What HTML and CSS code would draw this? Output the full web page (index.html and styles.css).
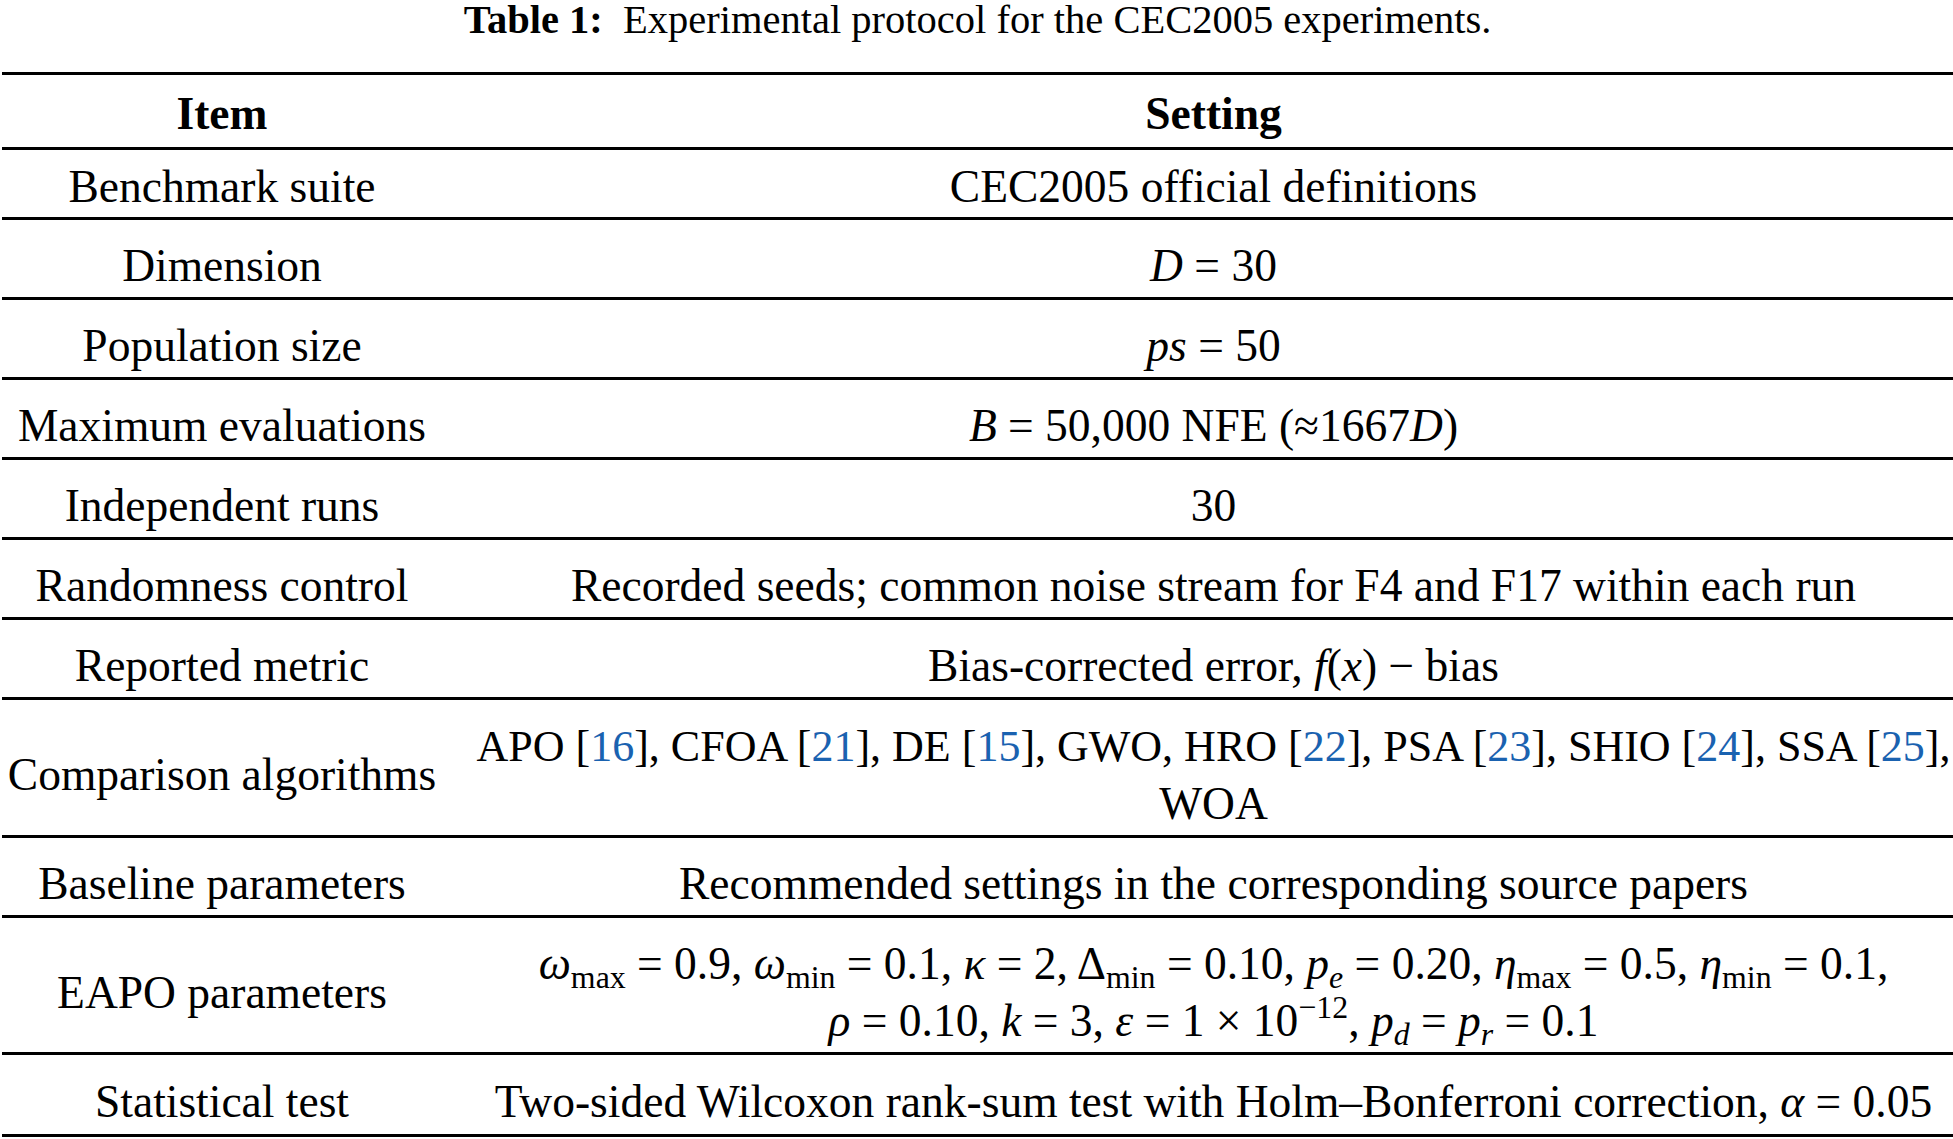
FILE: index.html
```html
<!DOCTYPE html>
<html>
<head>
<meta charset="utf-8">
<link rel="stylesheet" href="styles.css">
</head>
<body>
<div class="page">
  <div class="caption"><span class="cap-label">Table 1:</span>&nbsp; Experimental protocol for the CEC2005 experiments.</div>
  <table class="proto">
    <colgroup><col class="c1"><col class="c2"></colgroup>
    <thead>
      <tr class="head"><th>Item</th><th>Setting</th></tr>
    </thead>
    <tbody>
      <tr class="first"><td>Benchmark suite</td><td>CEC2005 official definitions</td></tr>
      <tr><td>Dimension</td><td><i>D</i> = 30</td></tr>
      <tr><td>Population size</td><td><i>ps</i> = 50</td></tr>
      <tr><td>Maximum evaluations</td><td><i>B</i> = 50,000 NFE (≈1667<i>D</i>)</td></tr>
      <tr><td>Independent runs</td><td>30</td></tr>
      <tr><td>Randomness control</td><td>Recorded seeds; common noise stream for F4 and F17 within each run</td></tr>
      <tr><td>Reported metric</td><td>Bias-corrected error, <i>f</i>(<i>x</i>) − bias</td></tr>
      <tr class="two"><td>Comparison algorithms</td><td><span class="tight">APO [<span class="ref">16</span>], CFOA [<span class="ref">21</span>], DE [<span class="ref">15</span>], GWO, HRO [<span class="ref">22</span>], PSA [<span class="ref">23</span>], SHIO [<span class="ref">24</span>], SSA [<span class="ref">25</span>],</span><br>WOA</td></tr>
      <tr><td>Baseline parameters</td><td>Recommended settings in the corresponding source papers</td></tr>
      <tr class="two"><td>EAPO parameters</td><td><i>ω</i><sub>max</sub> = 0.9, <i>ω</i><sub>min</sub> = 0.1, <i>κ</i> = 2, Δ<sub>min</sub> = 0.10, <i>p<sub>e</sub></i> = 0.20, <i>η</i><sub>max</sub> = 0.5, <i>η</i><sub>min</sub> = 0.1,<br><i>ρ</i> = 0.10, <i>k</i> = 3, <i>ε</i> = 1 × 10<sup>−12</sup>, <i>p<sub>d</sub></i> = <i>p<sub>r</sub></i> = 0.1</td></tr>
      <tr class="last"><td>Statistical test</td><td>Two-sided Wilcoxon rank-sum test with Holm–Bonferroni correction, <i>α</i> = 0.05</td></tr>
    </tbody>
  </table>
</div>
</body>
</html>
```

FILE: styles.css
```css
html, body {
  margin: 0;
  padding: 0;
  background: #fff;
}
body {
  font-family: "Liberation Serif", "DejaVu Serif", serif;
  color: #000;
}
.page {
  width: 1951px;
  margin-left: 2px;
}
.caption {
  text-align: center;
  font-size: 40.5px;
  line-height: 40px;
  height: 72px;
}
.cap-label {
  font-weight: bold;
}
.proto {
  width: 100%;
  border-collapse: collapse;
  table-layout: fixed;
  font-size: 45.5px;
  line-height: 57px;
}
.c1 { width: 456px; }
.proto th, .proto td {
  text-align: center;
  vertical-align: middle;
  padding: 17px 0 3px;
  white-space: nowrap;
}
.proto td:first-child, .proto th:first-child {
  padding-right: 16px;
}
.proto td:last-child, .proto th:last-child {
  padding-left: 16px;
}
.proto tr {
  border-bottom: 3px solid #000;
}
.proto thead tr {
  border-top: 3px solid #000;
}
.proto th {
  font-weight: bold;
  padding-top: 10px;
  padding-bottom: 5px;
}
.proto tr.first td {
  padding-top: 8px;
  padding-bottom: 2px;
}
.proto tr.two td {
  padding-top: 17px;
  padding-bottom: 3px;
}
.proto tr.last td {
  padding-top: 18px;
  padding-bottom: 4px;
}
.tight {
  font-size: 44px;
}
.ref {
  color: #1a62b0;
}
sub, sup {
  font-size: 0.7em;
  line-height: 0;
}
sub { vertical-align: -0.28em; }
sup { vertical-align: 0.55em; }
i sub { font-style: italic; }
```
